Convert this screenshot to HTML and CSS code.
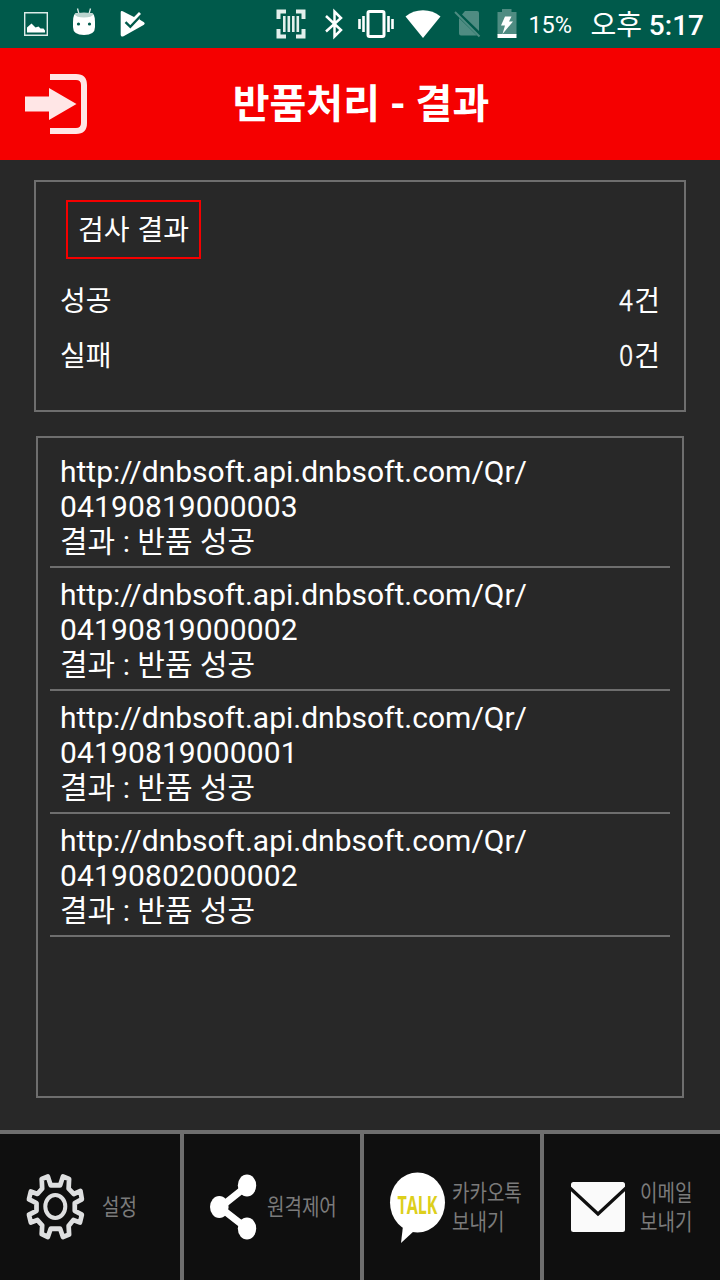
FILE: index.html
```
<!DOCTYPE html>
<html lang="ko">
<head>
<meta charset="utf-8">
<title>반품처리 - 결과</title>
<link rel="stylesheet" href="styles.css">
</head>
<body>
<div class="screen">
  <div class="status">
    <div class="status-left">
      <svg width="24" height="24" viewBox="0 0 24 24"><path d="M.7.7h22.6v22.6H.7z" fill="none" stroke="#dcebe8" stroke-width="1.4"/><path d="M3 20.5v-5l4.500-4 4 4 3-1 2 2h3l1.500 2v2z" fill="#fff"/></svg>
      <svg width="24" height="28" viewBox="0 0 24 28"><path d="M5.500.5 7 6M18.500.5 17 6" stroke="#dcebe8" stroke-width="1.300"/><path d="M1 14Q1 5 5 5h14q4 0 4 9v5q0 8-11 8T1 19z" fill="#fff"/><path d="M2.500 6Q5 4.500 12 4.500t9.500 1.500Q20 9.500 12 9.500T2.500 6z" fill="#bcd4cf"/><circle cx="6.500" cy="16" r="1.600" fill="#005a4b"/><circle cx="17.500" cy="16" r="1.600" fill="#005a4b"/></svg>
      <svg width="26" height="26" viewBox="0 0 26 26"><path d="M.7 1.500q0-2 2-1.200L14 6l5-5 2 2-1.500 5.500 4.500 2.700q1.500 1.300 0 2.600L4 25q-3 1.500-3.300-1z" fill="#fff"/><path d="M5.500 11.200l4.800 4.600L21.500 4" fill="none" stroke="#005a4b" stroke-width="2.400"/></svg>
    </div>
    <svg class="i-scan" width="30" height="30" viewBox="0 0 30 30" fill="none" stroke="#e2efec"><path d="M2.500 10V2.500H10M20 2.500h7.500V10M27.500 20v7.500H20M10 27.500H2.500V20" stroke-width="4"/><path d="M8.300 7v16M12.800 7v16M17.300 7v16M21.800 7v16" stroke-width="2.600"/></svg>
    <svg class="i-bt" width="18" height="30" viewBox="0 0 18 30" fill="none" stroke="#fff" stroke-width="2.500"><path d="M1 7l15 14-6.500 6.500v-25L16 9 1 22.500"/></svg>
    <svg class="i-vib" width="36" height="28" viewBox="0 0 36 28" fill="none" stroke="#fff"><rect x="10" y="1.500" width="16" height="25" rx="1.500" stroke-width="3"/><path d="M1.500 9v10M5.500 6v16M30.500 6v16M34.500 9v10" stroke-width="2.600"/></svg>
    <svg class="i-wifi" width="36" height="28" viewBox="0 0 36 28"><path d="M.5 6.500Q8 .2 18 .2t17.500 6.300L18 28z" fill="#fff"/></svg>
    <svg class="i-sim" width="27" height="28" viewBox="0 0 27 28"><path d="M11 1h12q2 0 2 2v18L8 4.500zM5 8l18 17.500H7q-2 0-2-2z" fill="#4f8c82"/><path d="M1 2l24.500 24.500" stroke="#4f8c82" stroke-width="2"/></svg>
    <svg class="i-bat" width="20" height="29" viewBox="0 0 20 29"><path d="M.5 3H5V0h9.500v3h5v23H.5z" fill="#4f8c82"/><path d="M.5 25h19v4H.5z" fill="#fff"/><path d="M8 7.500h6.500L12 12.500h4L5.500 25 8 16.500H4z" fill="#fff"/></svg>
    <span class="pct">15%</span>
    <span class="clock"><span class="ampm">오후</span> 5:17</span>
  </div>

  <header class="header">
    <svg class="exit" width="62" height="60" viewBox="0 0 62 60"><path d="M0 22.500h24V14l27.500 16L24 46v-8.500H0z" fill="#ffe6e6"/><path d="M25 3h26q8 0 8 8v38q0 8-8 8H25" fill="none" stroke="#ffe6e6" stroke-width="6"/></svg>
    <h1 class="title">반품처리 - 결과</h1>
  </header>

  <section class="summary">
    <h2 class="badge">검사 결과</h2>
    <div class="line"><span>성공</span><span class="count"><span class="num">4</span>건</span></div>
    <div class="line"><span>실패</span><span class="count"><span class="num">0</span>건</span></div>
  </section>

  <section class="list">
    <div class="item">http://dnbsoft.api.dnbsoft.com/Qr/<br><span class="code">04190819000003</span><br>결과 : 반품 성공</div>
    <div class="item">http://dnbsoft.api.dnbsoft.com/Qr/<br><span class="code">04190819000002</span><br>결과 : 반품 성공</div>
    <div class="item">http://dnbsoft.api.dnbsoft.com/Qr/<br><span class="code">04190819000001</span><br>결과 : 반품 성공</div>
    <div class="item">http://dnbsoft.api.dnbsoft.com/Qr/<br><span class="code">04190802000002</span><br>결과 : 반품 성공</div>
  </section>

  <nav class="tabs">
    <div class="tab tab-settings">
      <svg width="58" height="68" viewBox="0 0 58 68" fill="none" stroke="#dedfe0" stroke-width="5" stroke-linejoin="round"><path d="M24 11.500h10L37 2.500l6.500 2.500-.5 10 5.500 5.500 7-3 1.500 8.500-7.500 4v8l7.500 4-2 8-7-2.500-5 6 .5 9-6.500 2.500-3-8.500H24l-3 8.500L14.500 62l.5-9-5-5.500L3 50l-2-8 8-4v-8l-8-4 2-8 7 2.500 5-5.500-.5-10L21 2.500z" transform="translate(2 1.100) scale(.945 .967)"/><ellipse cx="29.300" cy="33.500" rx="10" ry="11.500" stroke-width="4"/></svg>
      <span class="label">설정</span>
    </div>
    <div class="tab tab-remote">
      <svg width="46" height="65" viewBox="0 0 46 65"><path d="M37 11L10 32.500l27 21" fill="none" stroke="#fff" stroke-width="7"/><g fill="#fff"><ellipse cx="37" cy="10.500" rx="9.200" ry="11"/><ellipse cx="9.300" cy="32" rx="9.300" ry="11"/><ellipse cx="37" cy="53.500" rx="9.200" ry="11"/></g></svg>
      <span class="label">원격제어</span>
    </div>
    <div class="tab tab-talk">
      <svg width="56" height="70" viewBox="0 0 56 70"><ellipse cx="27.500" cy="30.500" rx="27.500" ry="30" fill="#fff"/><path d="M13 54L11 71l13-12z" fill="#fff"/><text class="talk" x="7.500" y="41.500" textLength="40" lengthAdjust="spacingAndGlyphs">TALK</text></svg>
      <span class="label">카카오톡<br>보내기</span>
    </div>
    <div class="tab tab-mail">
      <svg width="54" height="50" viewBox="0 0 54 50"><rect width="54" height="50" rx="2.500" fill="#fafafa"/><path d="M-1 6l28 26L55 6" fill="none" stroke="#0f0f0f" stroke-width="3.200"/></svg>
      <span class="label">이메일<br>보내기</span>
    </div>
  </nav>
</div>
</body>
</html>
```
FILE: styles.css
```
* { box-sizing: border-box; }
body { margin: 0; background: #282828; color: #fff; font-family: Roboto, "Noto Sans CJK KR", sans-serif; }
svg { display: block; flex: none; overflow: visible; }
.screen { display: flex; flex-direction: column; width: 720px; height: 1280px; overflow: hidden; background: #282828; }

.status { display: flex; align-items: center; height: 48px; padding: 0 16px 0 24px; background: #005a4b; white-space: nowrap; }
.status-left { display: flex; align-items: center; gap: 24px; margin-right: auto; }
.status-left svg:nth-child(2) { margin-top: -5px; }
.i-scan { margin-right: 19px; }
.i-bt { margin-right: 15px; }
.i-vib { margin-right: 11px; }
.i-wifi { margin-right: 13px; }
.i-sim { margin-right: 16px; }
.i-bat { margin: -2px 11px 0 0; }
.pct { width: 44px; margin-right: 18px; padding-top: 2px; font-size: 23.5px; line-height: 48px; }
.clock { padding-top: 3px; font-size: 28px; font-weight: 500; line-height: 48px; }
.ampm { font-weight: 400; }

.header { display: grid; grid-template-columns: 62px 1fr 62px; align-items: center; height: 112px; padding: 0 25px; background: #f50000; }
.title { margin: 0; padding: 1px 0 0 2px; font-family: Roboto, "Noto Sans CJK KR", sans-serif; font-size: 40px; font-weight: 700; line-height: 60px; text-align: center; }

.summary { height: 232px; margin: 20px 34px 0; padding: 18px 24px 0; border: 2px solid #6e6e6e; font-family: "Noto Sans CJK KR", sans-serif; font-size: 28px; }
.badge { width: 135px; height: 59px; margin: 0 0 13px 6px; border: 2px solid #f50000; font-size: 28px; font-weight: 400; line-height: 53px; text-align: center; }
.line { display: flex; justify-content: space-between; height: 55px; line-height: 55px; }
.num { display: inline-block; margin-right: 1px; font-weight: 300; -webkit-text-stroke: .6px #fff; transform: scaleX(.92); transform-origin: right; }

.list { height: 662px; margin: 24px 36px 0; padding: 7px 12px 0; border: 2px solid #6e6e6e; }
.item { height: 123px; padding: 9px 10px 0; border-bottom: 2px solid #6e6e6e; font-size: 30px; line-height: 35px; }
.code { letter-spacing: .12px; }

.tabs { display: grid; grid-template-columns: 184px 180px 180px 176px; height: 150px; margin-top: auto; border-top: 4px solid #6e6e6e; background: #0f0f0f; }
.tab { display: flex; align-items: center; border-right: 4px solid #6e6e6e; }
.tab:last-child { border-right: 0; }
.tab-settings { padding-left: 26px; gap: 18px; }
.tab-remote { padding-left: 26px; gap: 11px; }
.tab-talk { padding-left: 26px; gap: 6px; }
.tab-mail { padding-left: 27px; gap: 15px; }
.label { flex: none; padding-bottom: 3px; color: #7b7b7b; font-family: "Noto Sans CJK KR", sans-serif; font-size: 23px; line-height: 29px; white-space: nowrap; transform: scaleX(.825); transform-origin: left; }
.talk { fill: #ddcf1c; font-family: "Open Sans", sans-serif; font-size: 25px; font-weight: 700; }
```
